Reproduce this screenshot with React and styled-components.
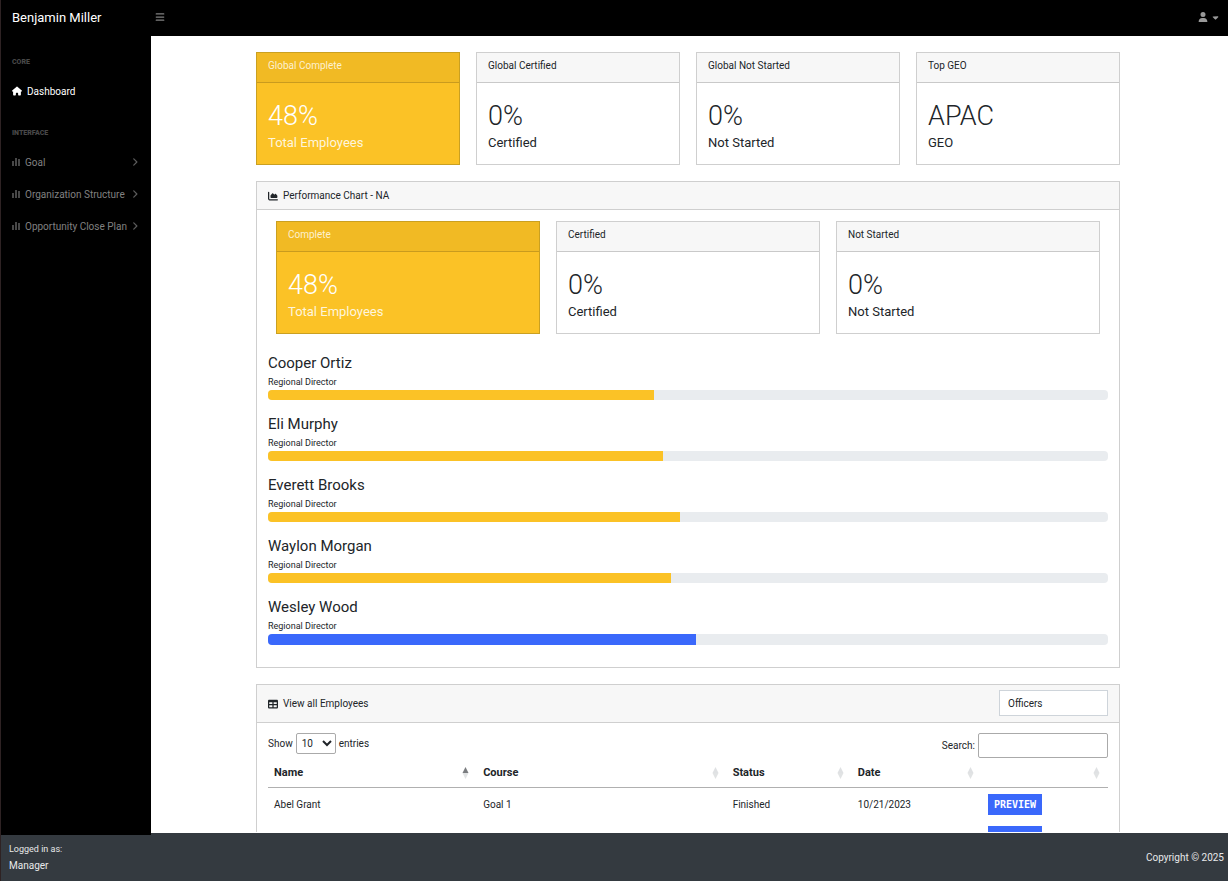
import React from 'react'
import styled, { createGlobalStyle, css } from 'styled-components'
import {
  FaAngleRight,
  FaBars,
  FaCaretDown,
  FaChartArea,
  FaHouse,
  FaTable,
  FaUser
} from 'react-icons/fa6'

const YELLOW = '#fbc226'
const BLUE = '#3a68fb'

const STATS = [
  { title: 'Global Complete', value: '48%', label: 'Total Employees', active: true },
  { title: 'Global Certified', value: '0%', label: 'Certified' },
  { title: 'Global Not Started', value: '0%', label: 'Not Started' },
  { title: 'Top GEO', value: 'APAC', label: 'GEO' }
]

const REGION_STATS = [
  { title: 'Complete', value: '48%', label: 'Total Employees', active: true },
  { title: 'Certified', value: '0%', label: 'Certified' },
  { title: 'Not Started', value: '0%', label: 'Not Started' }
]

const DIRECTORS = [
  { name: 'Cooper Ortiz', progress: 46 },
  { name: 'Eli Murphy', progress: 47 },
  { name: 'Everett Brooks', progress: 49 },
  { name: 'Waylon Morgan', progress: 48 },
  { name: 'Wesley Wood', progress: 51 }
]

const COLUMNS = [
  { title: 'Name', width: '24.9%', sorted: true },
  { title: 'Course', width: '29.7%' },
  { title: 'Status', width: '14.9%' },
  { title: 'Date', width: '15.5%' },
  { title: '', width: '15%' }
]

const EMPLOYEES = [
  { name: 'Abel Grant', course: 'Goal 1', status: 'Finished', date: '10/21/2023' },
  { name: '', course: '', status: '', date: '' }
]

const GlobalStyle = createGlobalStyle`
  * {
    box-sizing: border-box;
  }

  body {
    margin: 0;
    background: #fff;
    color: #212529;
    font-family: Roboto, "Liberation Sans", sans-serif;
    font-size: 10px;
    line-height: 17px;
  }

  button, input, select {
    font: inherit;
    color: inherit;
  }
`

const Page = styled.div`
  display: flex;
  flex-direction: column;
  height: 100vh;
  overflow: hidden;
  border-left: 1px solid #2e2223;
`

const TopBar = styled.header`
  display: flex;
  align-items: center;
  flex: none;
  height: 36px;
  padding: 0 8px 2px 11px;
  background: #000;
`

const Brand = styled.a`
  width: 138px;
  color: #fff;
  font-size: 13px;
  text-decoration: none;
`

const BarButton = styled.button`
  display: flex;
  align-items: center;
  gap: 3px;
  padding: 5px;
  border: 0;
  background: none;
  color: #808080;
`

const UserButton = styled(BarButton)`
  margin-left: auto;
  padding: 0;
  color: #999;
`

const Columns = styled.div`
  display: flex;
  flex: 1;
  min-height: 0;
`

const Sidebar = styled.aside`
  display: flex;
  flex-direction: column;
  flex: none;
  width: 150px;
  background: #000;
`

const Nav = styled.nav`
  flex: 1;
`

const NavHeading = styled.h2`
  margin: 0;
  padding: 20px 11px 7px;
  color: #484848;
  font-size: 7px;
  font-weight: 900;
  line-height: 12px;
  text-transform: uppercase;
`

const NavLink = styled.a`
  display: flex;
  align-items: center;
  height: 32px;
  padding: 0 11px;
  color: ${props => props.$active ? '#fff' : '#808080'};
  text-decoration: none;
  white-space: nowrap;

  svg {
    flex: none;
    color: ${props => props.$active ? '#fff' : '#484848'};
  }
`

const NavText = styled.span`
  flex: 1;
  padding-left: 5px;
`

const Chevron = styled(FaAngleRight)`
  && {
    color: #5c5c5c;
  }
`

const SidebarFooter = styled.div`
  padding: 6px 8px 7px;
  background: #343a40;
  color: #e8e9ea;

  small {
    display: block;
    font-size: 9px;
    line-height: 16px;
  }
`

const Main = styled.div`
  display: flex;
  flex-direction: column;
  flex: 1;
  min-width: 0;
`

const Scroller = styled.main`
  flex: 1;
  min-height: 0;
  overflow: hidden;
  padding: 16px 3px 0 0;
`

const Container = styled.div`
  display: flex;
  flex-direction: column;
  gap: 16px;
  max-width: 864px;
  margin: 0 auto;
`

const Footer = styled.footer`
  flex: none;
  padding: 16px 4px 15px;
  border-top: 1px solid #fff;
  background: #343a40;
  color: #e8e9ea;
  text-align: right;
`

const StatRow = styled.div`
  display: grid;
  grid-template-columns: repeat(${props => props.$columns}, 1fr);
  gap: 16px;
  padding: ${props => props.$inset ? '0 8px' : '0'};
`

const Card = styled.section`
  border: 1px solid #cfcfcf;
  background: #fff;
`

const CardHeader = styled.header`
  display: flex;
  align-items: center;
  gap: 5px;
  padding: 5px 11px;
  border-bottom: 1px solid #cfcfcf;
  background: #f7f7f7;
`

const StatHeader = styled.header`
  padding: 4px 11px 8px;
  border-bottom: 1px solid #c9c9c9;
  background: #f7f7f7;
`

const StatBody = styled.div`
  padding: 16px 11px 11px;
`

const StatValue = styled.div`
  font-size: 27px;
  font-weight: 300;
  line-height: 34px;
`

const StatLabel = styled.div`
  font-size: 13px;
  line-height: 20px;
`

const StatCard = styled(Card)`
  ${props => props.$active && css`
    border-color: #caa021;
    background: ${YELLOW};
    color: #fff;

    ${StatHeader} {
      border-color: #c99b1e;
      background: #f1ba24;
      color: #fdf1d0;
    }

    ${StatLabel} {
      color: #fef5dc;
    }
  `}
`

const ChartBody = styled.div`
  padding: 11px 11px 22px;
`

const DirectorList = styled.div`
  display: flex;
  flex-direction: column;
  gap: 14px;
  margin-top: 19px;
`

const DirectorName = styled.h3`
  margin: 0 0 2px;
  font-size: 15px;
  font-weight: 400;
  line-height: 20px;
`

const DirectorRole = styled.div`
  font-size: 9px;
  line-height: 15px;
`

const Track = styled.div`
  height: 10px;
  overflow: hidden;
  border-radius: 4px;
  background: #e9ecef;

  ${DirectorList} > :last-child > & {
    height: 11px;
  }
`

const Fill = styled.div`
  height: 100%;
  background: ${props => props.$done ? BLUE : YELLOW};
`

const RoleSelect = styled.select`
  width: 109px;
  height: 26px;
  margin: 0 0 1px auto;
  padding: 0 8px;
  border: 1px solid #ced4da;
  border-radius: 0;
  background: #fff;
  appearance: none;
`

const TableBody = styled.div`
  padding: 10px 11px;
`

const TableTools = styled.div`
  display: flex;
  align-items: flex-start;
  justify-content: space-between;
`

const ToolLabel = styled.label`
  display: flex;
  align-items: center;
  gap: 3px;
`

const LengthSelect = styled.select`
  width: 40px;
  height: 21px;
  padding: 0 1px;
  border: 1px solid #aaa;
  border-radius: 2px;
  background: #fff;
`

const SearchInput = styled.input`
  width: 130px;
  height: 25px;
  border: 1px solid #aaa;
  border-radius: 2px;
  background: #fff;
`

const Table = styled.table`
  width: 100%;
  border-spacing: 0;
  table-layout: fixed;

  th {
    padding: 6px 8px 6px 6px;
    border-bottom: 1px solid #b0b0b0;
    font-size: 11px;
    text-align: left;
  }

  td {
    height: 32px;
    padding: 6px 6px 5px;
  }
`

const HeadCell = styled.div`
  display: flex;
  align-items: center;
  justify-content: space-between;
  height: 17px;
`

const PreviewButton = styled.button`
  display: block;
  height: 21px;
  padding: 0 6px;
  border: 0;
  background: ${BLUE};
  color: #fff;
  font-family: "DejaVu Sans Mono", monospace;
  font-size: 10px;
  font-weight: 700;
`

const BarsIcon = () => (
  <svg width="8" height="8" viewBox="0 0 8 8" fill="currentColor">
    <rect y="3" width="2" height="5" />
    <rect x="3" width="2" height="8" />
    <rect x="6" y="1" width="2" height="7" />
  </svg>
)

const SortIcon = ({ sorted }) => (
  <svg width="7" height="12" viewBox="0 0 7 12">
    <path d="M3.5 0L6.5 6H0.5Z" fill={sorted ? '#7a7c7f' : '#dfe1e3'} />
    <path d="M3.5 12L6.5 6H0.5Z" fill="#e1e3e4" />
  </svg>
)

const Stats = ({ items, inset }) => (
  <StatRow $columns={items.length} $inset={inset}>
    {items.map(item => (
      <StatCard key={item.title} $active={item.active}>
        <StatHeader>{item.title}</StatHeader>
        <StatBody>
          <StatValue>{item.value}</StatValue>
          <StatLabel>{item.label}</StatLabel>
        </StatBody>
      </StatCard>
    ))}
  </StatRow>
)

const SideNav = () => (
  <Sidebar>
    <Nav>
      <NavHeading>Core</NavHeading>
      <NavLink href="#" $active>
        <FaHouse size={10} />
        <NavText>Dashboard</NavText>
      </NavLink>
      <NavHeading>Interface</NavHeading>
      {['Goal', 'Organization Structure', 'Opportunity Close Plan'].map(title => (
        <NavLink href="#" key={title}>
          <BarsIcon />
          <NavText>{title}</NavText>
          <Chevron size={10} />
        </NavLink>
      ))}
    </Nav>
    <SidebarFooter>
      <small>Logged in as:</small>
      Manager
    </SidebarFooter>
  </Sidebar>
)

const PerformanceChart = () => (
  <Card>
    <CardHeader><FaChartArea size={10} />Performance Chart - NA</CardHeader>
    <ChartBody>
      <Stats items={REGION_STATS} inset />
      <DirectorList>
        {DIRECTORS.map(({ name, progress }) => (
          <div key={name}>
            <DirectorName>{name}</DirectorName>
            <DirectorRole>Regional Director</DirectorRole>
            <Track>
              <Fill $done={progress > 50} style={{ width: `${progress}%` }} />
            </Track>
          </div>
        ))}
      </DirectorList>
    </ChartBody>
  </Card>
)

const EmployeeTable = () => (
  <Card>
    <CardHeader>
      <FaTable size={10} />View all Employees
      <RoleSelect aria-label="Role">
        <option>Officers</option>
      </RoleSelect>
    </CardHeader>
    <TableBody>
      <TableTools>
        <ToolLabel>
          Show
          <LengthSelect>
            <option>10</option>
          </LengthSelect>
          entries
        </ToolLabel>
        <ToolLabel>
          Search:
          <SearchInput type="search" />
        </ToolLabel>
      </TableTools>
      <Table>
        <colgroup>
          {COLUMNS.map(({ title, width }) => <col key={title} width={width} />)}
        </colgroup>
        <thead>
          <tr>
            {COLUMNS.map(({ title, sorted }) => (
              <th key={title}>
                <HeadCell><span>{title}</span><SortIcon sorted={sorted} /></HeadCell>
              </th>
            ))}
          </tr>
        </thead>
        <tbody>
          {EMPLOYEES.map((employee, i) => (
            <tr key={i}>
              <td>{employee.name}</td>
              <td>{employee.course}</td>
              <td>{employee.status}</td>
              <td>{employee.date}</td>
              <td><PreviewButton>PREVIEW</PreviewButton></td>
            </tr>
          ))}
        </tbody>
      </Table>
    </TableBody>
  </Card>
)

const App = () => (
  <Page>
    <GlobalStyle />
    <TopBar>
      <Brand href="#">Benjamin Miller</Brand>
      <BarButton aria-label="Toggle sidebar"><FaBars size={10} /></BarButton>
      <UserButton aria-label="Account"><FaUser size={10} /><FaCaretDown size={9} /></UserButton>
    </TopBar>
    <Columns>
      <SideNav />
      <Main>
        <Scroller>
          <Container>
            <Stats items={STATS} />
            <PerformanceChart />
            <EmployeeTable />
          </Container>
        </Scroller>
        <Footer>Copyright © 2025</Footer>
      </Main>
    </Columns>
  </Page>
)

export default App
